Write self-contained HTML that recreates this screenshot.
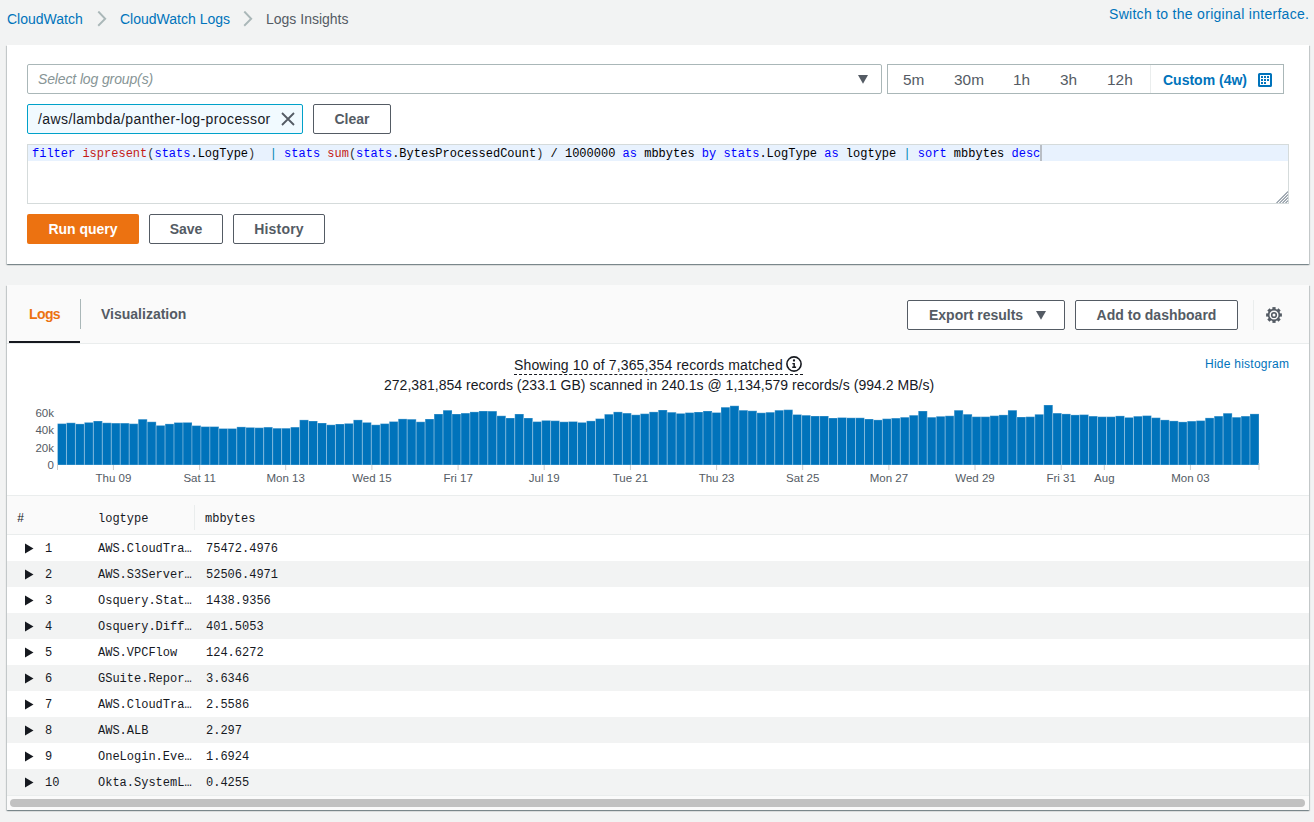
<!DOCTYPE html>
<html><head><meta charset="utf-8">
<style>
*{box-sizing:border-box;margin:0;padding:0}
html,body{width:1314px;height:822px;overflow:hidden;background:#f2f3f3;font-family:"Liberation Sans",sans-serif;font-size:14px;color:#16191f}
.a{position:absolute;white-space:nowrap}
.t14{font-size:14px;line-height:16px;height:16px}
.link{color:#0073bb}
.mono{font-family:"Liberation Mono",monospace;font-size:12px;line-height:16px;white-space:pre}
.panel{position:absolute;background:#fff;box-shadow:0 1px 1px 0 rgba(0,28,36,.3),1px 1px 1px 0 rgba(0,28,36,.15),-1px 1px 1px 0 rgba(0,28,36,.15)}
.btn{position:absolute;border:1px solid #545b64;border-radius:2px;background:#fff;color:#545b64;font-weight:bold;font-size:14px;text-align:center}
</style></head><body>

<!-- breadcrumb -->
<div class="a t14 link" style="left:7px;top:11px">CloudWatch</div>
<svg class="a" style="left:97px;top:11px" width="10" height="16" viewBox="0 0 10 16"><path d="M1.3 0.5 L8.2 7.8 L1.2 14.7" fill="none" stroke="#aab7b8" stroke-width="1.9"/></svg>
<div class="a t14 link" style="left:120px;top:11px">CloudWatch Logs</div>
<svg class="a" style="left:243px;top:11px" width="10" height="16" viewBox="0 0 10 16"><path d="M1.3 0.5 L8.2 7.8 L1.2 14.7" fill="none" stroke="#aab7b8" stroke-width="1.9"/></svg>
<div class="a t14" style="left:266px;top:11px;color:#545b64">Logs Insights</div>
<div class="a t14 link" style="left:1109px;top:6px;letter-spacing:0.29px">Switch to the original interface.</div>

<!-- query panel -->
<div class="panel" style="left:7px;top:45px;width:1302px;height:219px"></div>

<!-- log group select -->
<div class="a" style="left:27px;top:64px;width:855px;height:30px;border:1px solid #aab7b8;border-radius:2px;background:#fff"></div>
<div class="a t14" style="left:38px;top:71px;font-style:italic;color:#879596;letter-spacing:-0.13px">Select log group(s)</div>
<svg class="a" style="left:857px;top:74px" width="12" height="10" viewBox="0 0 12 10"><path d="M1 1 H11 L6 9.8 Z" fill="#545b64"/></svg>

<!-- time range -->
<div class="a" style="left:887px;top:64px;width:397px;height:30px;border:1px solid #aab7b8;background:#fff"></div>
<div class="a" style="left:1150px;top:65px;width:1px;height:28px;background:#eaeded"></div>
<div class="a t14" style="left:903px;top:72px;color:#545b64;transform:scaleX(1.1);transform-origin:0 0">5m</div>
<div class="a t14" style="left:954px;top:72px;color:#545b64;transform:scaleX(1.1);transform-origin:0 0">30m</div>
<div class="a t14" style="left:1013px;top:72px;color:#545b64;transform:scaleX(1.1);transform-origin:0 0">1h</div>
<div class="a t14" style="left:1060px;top:72px;color:#545b64;transform:scaleX(1.1);transform-origin:0 0">3h</div>
<div class="a t14" style="left:1107px;top:72px;color:#545b64;transform:scaleX(1.1);transform-origin:0 0">12h</div>
<div class="a t14 link" style="left:1163px;top:72px;font-weight:bold">Custom (4w)</div>
<svg class="a" style="left:1258px;top:73px" width="14" height="14" viewBox="0 0 14 14"><rect x="1" y="1" width="12" height="12" rx="0.6" fill="none" stroke="#0073bb" stroke-width="2"/><g fill="#0073bb"><rect x="3" y="3" width="2" height="2" rx="0.3"/><rect x="6" y="3" width="2" height="2" rx="0.3"/><rect x="9" y="3" width="2" height="2" rx="0.3"/><rect x="3" y="6" width="2" height="2" rx="0.3"/><rect x="6" y="6" width="2" height="2" rx="0.3"/><rect x="9" y="6" width="2" height="2" rx="0.3"/><rect x="3" y="9" width="2" height="2" rx="0.3"/><rect x="6" y="9" width="2" height="2" rx="0.3"/></g></svg>

<!-- token -->
<div class="a" style="left:27px;top:104px;width:276px;height:30px;border:1px solid #00a1c9;border-radius:2px;background:#f1faff"></div>
<div class="a t14" style="left:38px;top:111px;letter-spacing:0.4px">/aws/lambda/panther-log-processor</div>
<svg class="a" style="left:281px;top:112px" width="14" height="14" viewBox="0 0 14 14"><path d="M1 1 L13 13 M13 1 L1 13" stroke="#545b64" stroke-width="1.8"/></svg>
<div class="btn" style="left:313px;top:104px;width:78px;height:30px;line-height:28px">Clear</div>

<!-- editor -->
<div class="a" style="left:27px;top:144px;width:1262px;height:60px;border:1px solid #d5dbdb;background:#fff"></div>
<div class="a" style="left:28px;top:145px;width:1260px;height:16px;background:#e8f2fe"></div>
<div class="a mono" style="left:32px;top:146px;color:#000"><span style="color:#0000ff">filter</span> <span style="color:#c41a16">ispresent</span><span style="color:#333">(</span><span style="color:#0000ff">stats</span>.LogType<span style="color:#333">)</span>  <span style="color:#0086b3">|</span> <span style="color:#0000ff">stats</span> <span style="color:#c41a16">sum</span><span style="color:#333">(</span><span style="color:#0000ff">stats</span>.BytesProcessedCount<span style="color:#333">)</span> / 1000000 <span style="color:#0000ff">as</span> mbbytes <span style="color:#0000ff">by</span> <span style="color:#0000ff">stats</span>.LogType <span style="color:#0000ff">as</span> logtype <span style="color:#0086b3">|</span> <span style="color:#0000ff">sort</span> mbbytes <span style="color:#0000ff">desc</span></div>

<svg class="a" style="left:1276px;top:191px" width="12" height="12" viewBox="0 0 12 12"><path d="M0.5 12 L12 0.5 M3.5 12 L12 3.5 M6.5 12 L12 6.5 M9.5 12 L12 9.5" stroke="#76828f" stroke-width="1.05"/></svg>
<div class="a" style="left:1040px;top:145px;width:2px;height:16px;background:#b9bec5"></div>
<!-- buttons -->
<div class="btn" style="left:27px;top:214px;width:112px;height:30px;line-height:30px;border:none;background:#ec7211;color:#fff">Run query</div>
<div class="btn" style="left:149px;top:214px;width:74px;height:30px;line-height:28px">Save</div>
<div class="btn" style="left:233px;top:214px;width:92px;height:30px;line-height:28px;letter-spacing:0.2px">History</div>

<!-- results panel -->
<div class="panel" style="left:7px;top:285px;width:1302px;height:525px"></div>
<div class="a" style="left:7px;top:285px;width:1302px;height:59px;background:#fafafa;border-bottom:1px solid #eaeded"></div>


<!-- tabs -->
<div class="a t14" style="left:29px;top:306px;font-weight:bold;color:#ec7211;letter-spacing:-0.6px">Logs</div>
<div class="a" style="left:80px;top:299px;width:1px;height:30px;background:#aab7b8"></div>
<div class="a t14" style="left:101px;top:306px;font-weight:bold;color:#545b64">Visualization</div>
<div class="a" style="left:9px;top:341px;width:71px;height:2px;background:#16191f"></div>
<div class="btn" style="left:907px;top:300px;width:158px;height:30px;line-height:28px;text-align:left;padding-left:21px">Export results</div>
<svg class="a" style="left:1035px;top:310px" width="12" height="10" viewBox="0 0 12 10"><path d="M1 1 H11 L6 9.8 Z" fill="#545b64"/></svg>
<div class="btn" style="left:1075px;top:300px;width:163px;height:30px;line-height:28px">Add to dashboard</div>
<div class="a" style="left:1253px;top:300px;width:1px;height:30px;background:#eaeded"></div>
<svg class="a" style="left:1265px;top:306px" width="18" height="18" viewBox="0 0 18 18"><circle cx="9" cy="9" r="2.3" fill="none" stroke="#545b64" stroke-width="1.6"/><circle cx="9" cy="9" r="5.4" fill="none" stroke="#545b64" stroke-width="1.7"/><g fill="#545b64"><rect x="7.4" y="1.1" width="3.2" height="3" transform="rotate(0 9 9)"/><rect x="7.4" y="1.1" width="3.2" height="3" transform="rotate(45 9 9)"/><rect x="7.4" y="1.1" width="3.2" height="3" transform="rotate(90 9 9)"/><rect x="7.4" y="1.1" width="3.2" height="3" transform="rotate(135 9 9)"/><rect x="7.4" y="1.1" width="3.2" height="3" transform="rotate(180 9 9)"/><rect x="7.4" y="1.1" width="3.2" height="3" transform="rotate(225 9 9)"/><rect x="7.4" y="1.1" width="3.2" height="3" transform="rotate(270 9 9)"/><rect x="7.4" y="1.1" width="3.2" height="3" transform="rotate(315 9 9)"/></g></svg>

<!-- summary -->
<div class="a" style="left:1205px;top:357px;font-size:12px;line-height:14px;color:#0073bb;letter-spacing:0.25px">Hide histogram</div>
<div class="a" style="left:514px;top:356px;width:289px;height:19px;border-bottom:1px dashed #16191f"></div><div class="a t14" style="left:514px;top:356.5px;letter-spacing:0.15px">Showing 10 of 7,365,354 records matched</div>
<svg class="a" style="left:785px;top:355px" width="18" height="18" viewBox="0 0 18 18"><circle cx="9" cy="9" r="7.1" fill="none" stroke="#16191f" stroke-width="1.6"/><circle cx="9" cy="5.5" r="1.15" fill="#16191f"/><path d="M7.4 7.9 H9.9 V11.6 H11.1 V13 H7.2 V11.6 H8.4 V9.2 H7.4 Z" fill="#16191f"/></svg>
<div class="a t14" style="left:384px;top:377px;letter-spacing:0.025px">272,381,854 records (233.1 GB) scanned in 240.1s @ 1,134,579 records/s (994.2 MB/s)</div>

<!-- table -->
<div class="a" style="left:7px;top:495px;width:1302px;height:1px;background:#eaeded"></div>
<div class="a" style="left:7px;top:496px;width:1302px;height:38px;background:#fafafa"></div>
<div class="a" style="left:7px;top:534px;width:1302px;height:1px;background:#eaeded"></div>
<div class="a" style="left:194px;top:505px;width:1px;height:25px;background:#eaeded"></div>
<div class="a mono" style="left:17px;top:511px">#</div>
<div class="a mono" style="left:98px;top:511px">logtype</div>
<div class="a mono" style="left:205px;top:511px">mbbytes</div>
<div class="a" style="left:7px;top:535px;width:1302px;height:26px;background:#fff"></div>
<svg class="a" style="left:24px;top:543px" width="10" height="11" viewBox="0 0 10 11"><path d="M1 0.5 L9.5 5.5 L1 10.5 Z" fill="#16191f"/></svg>
<div class="a mono" style="left:45px;top:541px">1</div><div class="a mono" style="left:98px;top:541px">AWS.CloudTra…</div><div class="a mono" style="left:206px;top:541px">75472.4976</div>
<div class="a" style="left:7px;top:561px;width:1302px;height:26px;background:#f2f3f3"></div>
<svg class="a" style="left:24px;top:569px" width="10" height="11" viewBox="0 0 10 11"><path d="M1 0.5 L9.5 5.5 L1 10.5 Z" fill="#16191f"/></svg>
<div class="a mono" style="left:45px;top:567px">2</div><div class="a mono" style="left:98px;top:567px">AWS.S3Server…</div><div class="a mono" style="left:206px;top:567px">52506.4971</div>
<div class="a" style="left:7px;top:587px;width:1302px;height:26px;background:#fff"></div>
<svg class="a" style="left:24px;top:595px" width="10" height="11" viewBox="0 0 10 11"><path d="M1 0.5 L9.5 5.5 L1 10.5 Z" fill="#16191f"/></svg>
<div class="a mono" style="left:45px;top:593px">3</div><div class="a mono" style="left:98px;top:593px">Osquery.Stat…</div><div class="a mono" style="left:206px;top:593px">1438.9356</div>
<div class="a" style="left:7px;top:613px;width:1302px;height:26px;background:#f2f3f3"></div>
<svg class="a" style="left:24px;top:621px" width="10" height="11" viewBox="0 0 10 11"><path d="M1 0.5 L9.5 5.5 L1 10.5 Z" fill="#16191f"/></svg>
<div class="a mono" style="left:45px;top:619px">4</div><div class="a mono" style="left:98px;top:619px">Osquery.Diff…</div><div class="a mono" style="left:206px;top:619px">401.5053</div>
<div class="a" style="left:7px;top:639px;width:1302px;height:26px;background:#fff"></div>
<svg class="a" style="left:24px;top:647px" width="10" height="11" viewBox="0 0 10 11"><path d="M1 0.5 L9.5 5.5 L1 10.5 Z" fill="#16191f"/></svg>
<div class="a mono" style="left:45px;top:645px">5</div><div class="a mono" style="left:98px;top:645px">AWS.VPCFlow</div><div class="a mono" style="left:206px;top:645px">124.6272</div>
<div class="a" style="left:7px;top:665px;width:1302px;height:26px;background:#f2f3f3"></div>
<svg class="a" style="left:24px;top:673px" width="10" height="11" viewBox="0 0 10 11"><path d="M1 0.5 L9.5 5.5 L1 10.5 Z" fill="#16191f"/></svg>
<div class="a mono" style="left:45px;top:671px">6</div><div class="a mono" style="left:98px;top:671px">GSuite.Repor…</div><div class="a mono" style="left:206px;top:671px">3.6346</div>
<div class="a" style="left:7px;top:691px;width:1302px;height:26px;background:#fff"></div>
<svg class="a" style="left:24px;top:699px" width="10" height="11" viewBox="0 0 10 11"><path d="M1 0.5 L9.5 5.5 L1 10.5 Z" fill="#16191f"/></svg>
<div class="a mono" style="left:45px;top:697px">7</div><div class="a mono" style="left:98px;top:697px">AWS.CloudTra…</div><div class="a mono" style="left:206px;top:697px">2.5586</div>
<div class="a" style="left:7px;top:717px;width:1302px;height:26px;background:#f2f3f3"></div>
<svg class="a" style="left:24px;top:725px" width="10" height="11" viewBox="0 0 10 11"><path d="M1 0.5 L9.5 5.5 L1 10.5 Z" fill="#16191f"/></svg>
<div class="a mono" style="left:45px;top:723px">8</div><div class="a mono" style="left:98px;top:723px">AWS.ALB</div><div class="a mono" style="left:206px;top:723px">2.297</div>
<div class="a" style="left:7px;top:743px;width:1302px;height:26px;background:#fff"></div>
<svg class="a" style="left:24px;top:751px" width="10" height="11" viewBox="0 0 10 11"><path d="M1 0.5 L9.5 5.5 L1 10.5 Z" fill="#16191f"/></svg>
<div class="a mono" style="left:45px;top:749px">9</div><div class="a mono" style="left:98px;top:749px">OneLogin.Eve…</div><div class="a mono" style="left:206px;top:749px">1.6924</div>
<div class="a" style="left:7px;top:769px;width:1302px;height:26px;background:#f2f3f3"></div>
<svg class="a" style="left:24px;top:777px" width="10" height="11" viewBox="0 0 10 11"><path d="M1 0.5 L9.5 5.5 L1 10.5 Z" fill="#16191f"/></svg>
<div class="a mono" style="left:45px;top:775px">10</div><div class="a mono" style="left:98px;top:775px">Okta.SystemL…</div><div class="a mono" style="left:206px;top:775px">0.4255</div>
<div class="a" style="left:7px;top:795px;width:1302px;height:1px;background:#eaeded"></div>
<div class="a" style="left:7px;top:796px;width:1302px;height:14px;background:#fafafa"></div>
<div class="a" style="left:10px;top:799px;width:1295px;height:8px;border-radius:4px;background:#c1c1c1"></div>
<!-- /table -->

<!-- hist --><svg class="a" style="left:0;top:400px" width="1314" height="95" viewBox="0 0 1314 95">
<g fill="#0073bb" stroke="#fff" stroke-opacity="0.28" stroke-width="1"><rect x="57.50" y="23.6" width="8.966" height="41.4"/><rect x="66.47" y="22.8" width="8.966" height="42.2"/><rect x="75.43" y="23.9" width="8.966" height="41.1"/><rect x="84.40" y="22.4" width="8.966" height="42.6"/><rect x="93.37" y="21.0" width="8.966" height="44.0"/><rect x="102.33" y="22.8" width="8.966" height="42.2"/><rect x="111.30" y="23.1" width="8.966" height="41.9"/><rect x="120.26" y="23.1" width="8.966" height="41.9"/><rect x="129.23" y="23.7" width="8.966" height="41.3"/><rect x="138.20" y="19.2" width="8.966" height="45.8"/><rect x="147.16" y="21.8" width="8.966" height="43.2"/><rect x="156.13" y="25.4" width="8.966" height="39.6"/><rect x="165.10" y="23.9" width="8.966" height="41.1"/><rect x="174.06" y="22.5" width="8.966" height="42.5"/><rect x="183.03" y="22.4" width="8.966" height="42.6"/><rect x="192.00" y="25.6" width="8.966" height="39.4"/><rect x="200.96" y="26.6" width="8.966" height="38.4"/><rect x="209.93" y="26.6" width="8.966" height="38.4"/><rect x="218.90" y="28.5" width="8.966" height="36.5"/><rect x="227.86" y="28.5" width="8.966" height="36.5"/><rect x="236.83" y="26.9" width="8.966" height="38.1"/><rect x="245.79" y="27.4" width="8.966" height="37.6"/><rect x="254.76" y="27.7" width="8.966" height="37.3"/><rect x="263.73" y="27.1" width="8.966" height="37.9"/><rect x="272.69" y="28.2" width="8.966" height="36.8"/><rect x="281.66" y="28.2" width="8.966" height="36.8"/><rect x="290.63" y="27.1" width="8.966" height="37.9"/><rect x="299.59" y="19.9" width="8.966" height="45.1"/><rect x="308.56" y="21.0" width="8.966" height="44.0"/><rect x="317.53" y="23.0" width="8.966" height="42.0"/><rect x="326.49" y="24.8" width="8.966" height="40.2"/><rect x="335.46" y="24.0" width="8.966" height="41.0"/><rect x="344.43" y="23.4" width="8.966" height="41.6"/><rect x="353.39" y="19.9" width="8.966" height="45.1"/><rect x="362.36" y="22.4" width="8.966" height="42.6"/><rect x="371.32" y="24.8" width="8.966" height="40.2"/><rect x="380.29" y="23.6" width="8.966" height="41.4"/><rect x="389.26" y="21.5" width="8.966" height="43.5"/><rect x="398.22" y="18.9" width="8.966" height="46.1"/><rect x="407.19" y="19.2" width="8.966" height="45.8"/><rect x="416.16" y="21.8" width="8.966" height="43.2"/><rect x="425.12" y="19.0" width="8.966" height="46.0"/><rect x="434.09" y="14.0" width="8.966" height="51.0"/><rect x="443.06" y="10.2" width="8.966" height="54.8"/><rect x="452.02" y="14.0" width="8.966" height="51.0"/><rect x="460.99" y="13.1" width="8.966" height="51.9"/><rect x="469.96" y="11.9" width="8.966" height="53.1"/><rect x="478.92" y="11.0" width="8.966" height="54.0"/><rect x="487.89" y="11.1" width="8.966" height="53.9"/><rect x="496.85" y="15.8" width="8.966" height="49.2"/><rect x="505.82" y="18.0" width="8.966" height="47.0"/><rect x="514.79" y="14.0" width="8.966" height="51.0"/><rect x="523.75" y="18.0" width="8.966" height="47.0"/><rect x="532.72" y="21.6" width="8.966" height="43.4"/><rect x="541.69" y="20.4" width="8.966" height="44.6"/><rect x="550.65" y="20.7" width="8.966" height="44.3"/><rect x="559.62" y="21.8" width="8.966" height="43.2"/><rect x="568.59" y="21.5" width="8.966" height="43.5"/><rect x="577.55" y="22.4" width="8.966" height="42.6"/><rect x="586.52" y="20.9" width="8.966" height="44.1"/><rect x="595.49" y="18.6" width="8.966" height="46.4"/><rect x="604.45" y="14.2" width="8.966" height="50.8"/><rect x="613.42" y="11.9" width="8.966" height="53.1"/><rect x="622.38" y="13.1" width="8.966" height="51.9"/><rect x="631.35" y="14.8" width="8.966" height="50.2"/><rect x="640.32" y="13.7" width="8.966" height="51.3"/><rect x="649.28" y="11.9" width="8.966" height="53.1"/><rect x="658.25" y="10.0" width="8.966" height="55.0"/><rect x="667.22" y="12.2" width="8.966" height="52.8"/><rect x="676.18" y="13.4" width="8.966" height="51.6"/><rect x="685.15" y="12.6" width="8.966" height="52.4"/><rect x="694.12" y="12.0" width="8.966" height="53.0"/><rect x="703.08" y="11.0" width="8.966" height="54.0"/><rect x="712.05" y="12.5" width="8.966" height="52.5"/><rect x="721.01" y="7.2" width="8.966" height="57.8"/><rect x="729.98" y="5.8" width="8.966" height="59.2"/><rect x="738.95" y="10.2" width="8.966" height="54.8"/><rect x="747.91" y="10.8" width="8.966" height="54.2"/><rect x="756.88" y="12.8" width="8.966" height="52.2"/><rect x="765.85" y="12.2" width="8.966" height="52.8"/><rect x="774.81" y="10.2" width="8.966" height="54.8"/><rect x="783.78" y="9.7" width="8.966" height="55.3"/><rect x="792.75" y="14.5" width="8.966" height="50.5"/><rect x="801.71" y="15.2" width="8.966" height="49.8"/><rect x="810.68" y="16.0" width="8.966" height="49.0"/><rect x="819.65" y="16.0" width="8.966" height="49.0"/><rect x="828.61" y="18.0" width="8.966" height="47.0"/><rect x="837.58" y="17.5" width="8.966" height="47.5"/><rect x="846.54" y="17.8" width="8.966" height="47.2"/><rect x="855.51" y="17.8" width="8.966" height="47.2"/><rect x="864.48" y="19.0" width="8.966" height="46.0"/><rect x="873.44" y="19.9" width="8.966" height="45.1"/><rect x="882.41" y="18.7" width="8.966" height="46.3"/><rect x="891.38" y="18.1" width="8.966" height="46.9"/><rect x="900.34" y="17.2" width="8.966" height="47.8"/><rect x="909.31" y="15.2" width="8.966" height="49.8"/><rect x="918.28" y="11.0" width="8.966" height="54.0"/><rect x="927.24" y="17.2" width="8.966" height="47.8"/><rect x="936.21" y="16.3" width="8.966" height="48.7"/><rect x="945.18" y="15.8" width="8.966" height="49.2"/><rect x="954.14" y="10.2" width="8.966" height="54.8"/><rect x="963.11" y="14.2" width="8.966" height="50.8"/><rect x="972.07" y="16.7" width="8.966" height="48.3"/><rect x="981.04" y="16.7" width="8.966" height="48.3"/><rect x="990.01" y="15.7" width="8.966" height="49.3"/><rect x="998.97" y="14.9" width="8.966" height="50.1"/><rect x="1007.94" y="10.2" width="8.966" height="54.8"/><rect x="1016.91" y="17.0" width="8.966" height="48.0"/><rect x="1025.87" y="16.7" width="8.966" height="48.3"/><rect x="1034.84" y="14.3" width="8.966" height="50.7"/><rect x="1043.81" y="5.0" width="8.966" height="60.0"/><rect x="1052.77" y="13.1" width="8.966" height="51.9"/><rect x="1061.74" y="13.9" width="8.966" height="51.1"/><rect x="1070.71" y="14.9" width="8.966" height="50.1"/><rect x="1079.67" y="14.6" width="8.966" height="50.4"/><rect x="1088.64" y="16.1" width="8.966" height="48.9"/><rect x="1097.60" y="16.7" width="8.966" height="48.3"/><rect x="1106.57" y="16.7" width="8.966" height="48.3"/><rect x="1115.54" y="15.9" width="8.966" height="49.1"/><rect x="1124.50" y="17.4" width="8.966" height="47.6"/><rect x="1133.47" y="16.2" width="8.966" height="48.8"/><rect x="1142.44" y="15.6" width="8.966" height="49.4"/><rect x="1151.40" y="17.7" width="8.966" height="47.3"/><rect x="1160.37" y="19.9" width="8.966" height="45.1"/><rect x="1169.34" y="20.9" width="8.966" height="44.1"/><rect x="1178.30" y="21.9" width="8.966" height="43.1"/><rect x="1187.27" y="21.1" width="8.966" height="43.9"/><rect x="1196.24" y="20.6" width="8.966" height="44.4"/><rect x="1205.20" y="17.9" width="8.966" height="47.1"/><rect x="1214.17" y="16.1" width="8.966" height="48.9"/><rect x="1223.13" y="13.2" width="8.966" height="51.8"/><rect x="1232.10" y="17.2" width="8.966" height="47.8"/><rect x="1241.07" y="16.1" width="8.966" height="48.9"/><rect x="1250.03" y="13.9" width="8.966" height="51.1"/></g>
<g stroke="#ccc" stroke-width="1"><line x1="113.4" y1="65" x2="113.4" y2="70"/><line x1="199.6" y1="65" x2="199.6" y2="70"/><line x1="285.7" y1="65" x2="285.7" y2="70"/><line x1="371.9" y1="65" x2="371.9" y2="70"/><line x1="458.1" y1="65" x2="458.1" y2="70"/><line x1="544.2" y1="65" x2="544.2" y2="70"/><line x1="630.4" y1="65" x2="630.4" y2="70"/><line x1="716.6" y1="65" x2="716.6" y2="70"/><line x1="802.7" y1="65" x2="802.7" y2="70"/><line x1="888.9" y1="65" x2="888.9" y2="70"/><line x1="975.0" y1="65" x2="975.0" y2="70"/><line x1="1061.2" y1="65" x2="1061.2" y2="70"/><line x1="1104.3" y1="65" x2="1104.3" y2="70"/><line x1="1190.4" y1="65" x2="1190.4" y2="70"/><line x1="57.5" y1="63" x2="57.5" y2="70"/><line x1="1259" y1="63" x2="1259" y2="70"/></g>
<g font-family="Liberation Sans" font-size="11.5" fill="#545b64"><text x="113.4" y="81.5" text-anchor="middle">Thu 09</text><text x="199.6" y="81.5" text-anchor="middle">Sat 11</text><text x="285.7" y="81.5" text-anchor="middle">Mon 13</text><text x="371.9" y="81.5" text-anchor="middle">Wed 15</text><text x="458.1" y="81.5" text-anchor="middle">Fri 17</text><text x="544.2" y="81.5" text-anchor="middle">Jul 19</text><text x="630.4" y="81.5" text-anchor="middle">Tue 21</text><text x="716.6" y="81.5" text-anchor="middle">Thu 23</text><text x="802.7" y="81.5" text-anchor="middle">Sat 25</text><text x="888.9" y="81.5" text-anchor="middle">Mon 27</text><text x="975.0" y="81.5" text-anchor="middle">Wed 29</text><text x="1061.2" y="81.5" text-anchor="middle">Fri 31</text><text x="1104.3" y="81.5" text-anchor="middle">Aug</text><text x="1190.4" y="81.5" text-anchor="middle">Mon 03</text><text x="54" y="17.2" text-anchor="end">60k</text><text x="54" y="34.3" text-anchor="end">40k</text><text x="54" y="51.9" text-anchor="end">20k</text><text x="54" y="69.2" text-anchor="end">0</text></g>
</svg><!-- /hist -->
</body></html>
